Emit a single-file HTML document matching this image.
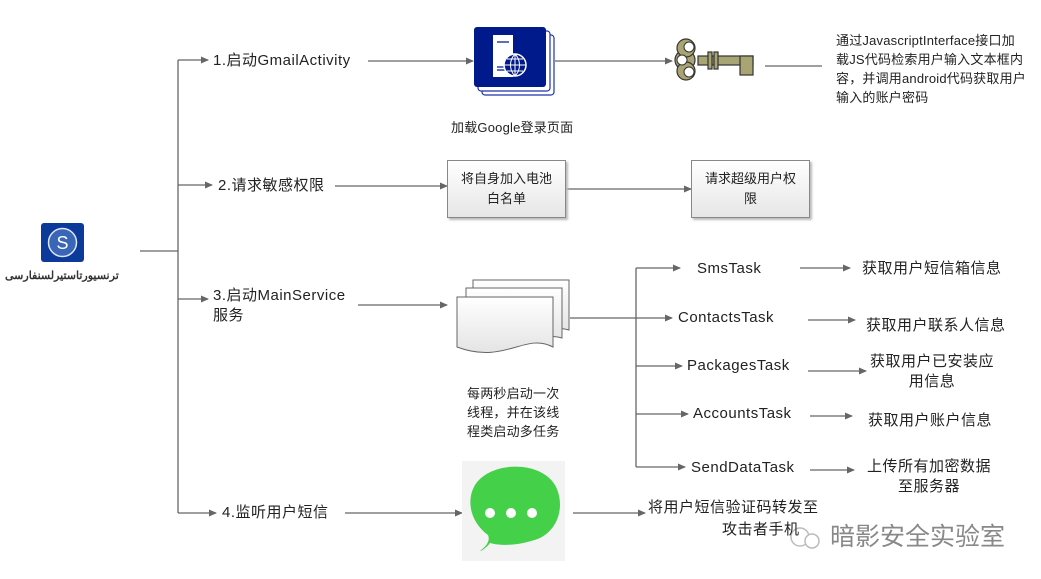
<!DOCTYPE html>
<html><head><meta charset="utf-8"><style>
body{margin:0;width:1041px;height:579px;background:#fff;overflow:hidden;position:relative;font-family:"Liberation Sans","Noto Sans CJK SC",sans-serif;color:#222}
.t{position:absolute;font-size:15px;white-space:nowrap;line-height:20px;letter-spacing:0.5px}
.s{font-size:13px;line-height:19px;letter-spacing:0.2px}
.box{position:absolute;width:117px;height:56px;border:1px solid #888;background:linear-gradient(#fff,#e6e6e6);box-shadow:2px 2px 2px #bbb;font-size:13px;line-height:20px;text-align:center;display:flex;align-items:center;justify-content:center}
</style></head><body>
<svg width="1041" height="579" style="position:absolute;left:0;top:0">
<defs><marker id="a" markerWidth="8" markerHeight="8" refX="7" refY="4" orient="auto" markerUnits="userSpaceOnUse"><path d="M0,0.5 L8,4 L0,7.5z" fill="#666"/></marker>
<linearGradient id="g" x1="0" y1="0" x2="0" y2="1"><stop offset="0" stop-color="#fff"/><stop offset="1" stop-color="#e4e4e4"/></linearGradient></defs>
<g stroke="#666" stroke-width="1.3" fill="none">
<path d="M140,251H178M178,60V513"/>
<path d="M178,60H208" marker-end="url(#a)"/>
<path d="M178,185H212" marker-end="url(#a)"/>
<path d="M178,299H208" marker-end="url(#a)"/>
<path d="M178,513H216" marker-end="url(#a)"/>
<path d="M368,61H473" marker-end="url(#a)"/>
<path d="M555,61H672" marker-end="url(#a)"/>
<path d="M765,66H822"/>
<path d="M335,186H447" marker-end="url(#a)"/>
<path d="M566,189H691" marker-end="url(#a)"/>
<path d="M358,305H447" marker-end="url(#a)"/>
<path d="M570,318H636M636,268V467"/>
<path d="M636,268H680" marker-end="url(#a)"/>
<path d="M636,318H672" marker-end="url(#a)"/>
<path d="M636,366H682" marker-end="url(#a)"/>
<path d="M636,414H688" marker-end="url(#a)"/>
<path d="M636,467H685" marker-end="url(#a)"/>
<path d="M800,268H850" marker-end="url(#a)"/>
<path d="M808,320H855" marker-end="url(#a)"/>
<path d="M808,371H866" marker-end="url(#a)"/>
<path d="M810,416H852" marker-end="url(#a)"/>
<path d="M810,470H854" marker-end="url(#a)"/>
<path d="M345,513H462" marker-end="url(#a)"/>
<path d="M573,513H645" marker-end="url(#a)"/>
</g>
<rect x="41" y="223" width="43" height="39" rx="3" fill="#0b3a9a"/>
<circle cx="62.5" cy="242.5" r="14" fill="#3a66b8" stroke="#dfe6f5" stroke-width="1.5"/>
<text x="62.5" y="249" font-size="18" fill="#fff" text-anchor="middle" font-family="Liberation Sans">S</text>
<rect x="482" y="35" width="72" height="60" rx="3" fill="#fff" stroke="#2233aa" stroke-width="1.2"/>
<rect x="478" y="31" width="72" height="60" rx="3" fill="#fff" stroke="#2233aa" stroke-width="1.2"/>
<rect x="474" y="27" width="72" height="60" rx="3" fill="#001a8c"/>
<rect x="493" y="35" width="20" height="42" fill="#fff"/>
<path d="M497,42h12M497,67h10M497,70h10" stroke="#001a8c" stroke-width="1.2"/>
<circle cx="515" cy="65" r="11" fill="#001a8c" stroke="#fff" stroke-width="1.5"/>
<path d="M504,65h22M515,54v22M507,59h16M507,71h16M515,54c-6,6-6,16,0,22M515,54c6,6,6,16,0,22" stroke="#fff" stroke-width="1" fill="none"/>
<g fill="#a9a474" stroke="#333" stroke-width="1.2">
<circle cx="685" cy="60" r="10"/><circle cx="686" cy="48" r="9"/><circle cx="686" cy="71" r="9"/>
<rect x="698" y="56" width="55" height="9"/><rect x="740" y="56" width="13" height="19"/><rect x="708" y="52" width="4" height="17"/><rect x="714" y="52" width="4" height="17"/>
</g>
<circle cx="682" cy="60" r="5" fill="#fff" stroke="#333"/><circle cx="689" cy="47" r="5" fill="#fff" stroke="#333"/><circle cx="689" cy="72" r="5" fill="#fff" stroke="#333"/>
<g stroke="#666" fill="url(#g)" stroke-width="1">
<path d="M473,280H569V330C550,324,530,338,473,330Z"/>
<path d="M466,288H562V338C543,332,523,346,466,338Z"/>
<path d="M457,297H553V347C525,332,505,365,457,347Z"/>
</g>
<rect x="462" y="461" width="103" height="100" fill="#f3f3f3"/>
<path d="M480,551C488,545 490,540 488,535C470,522 466,500 475,485C490,461 540,460 555,485C565,503 560,528 540,538C520,546 500,546 490,543C487,547 482,551 480,551Z" fill="#45d04a"/>
<circle cx="490" cy="513" r="5" fill="#fff"/><circle cx="511" cy="513" r="5" fill="#fff"/><circle cx="532" cy="513" r="5" fill="#fff"/>
<circle cx="800" cy="537" r="9" fill="none" stroke="#bbb" stroke-width="1.5"/>
<circle cx="812" cy="541" r="7" fill="#fff" stroke="#bbb" stroke-width="1.5"/>
</svg>
<div class="t" style="left:5px;top:266px;font-size:11px;font-weight:bold;color:#333;letter-spacing:0">ترنسیورتاستیرلسنفارسی</div>
<div class="t" style="left:213px;top:51px">1.启动GmailActivity</div>
<div class="t s" style="left:836px;top:31px">通过JavascriptInterface接口加<br>载JS代码检索用户输入文本框内<br>容，并调用android代码获取用户<br>输入的账户密码</div>
<div class="t s" style="left:451px;top:118px">加载Google登录页面</div>
<div class="t" style="left:218px;top:176px">2.请求敏感权限</div>
<div class="box" style="left:447px;top:160px">将自身加入电池<br>白名单</div>
<div class="box" style="left:691px;top:160px">请求超级用户权<br>限</div>
<div class="t" style="left:213px;top:286px">3.启动MainService<br>服务</div>
<div class="t s" style="left:467px;top:384px">每两秒启动一次<br>线程，并在该线<br>程类启动多任务</div>
<div class="t" style="left:697px;top:259px">SmsTask</div>
<div class="t" style="left:678px;top:308px">ContactsTask</div>
<div class="t" style="left:687px;top:356px">PackagesTask</div>
<div class="t" style="left:693px;top:404px">AccountsTask</div>
<div class="t" style="left:691px;top:458px">SendDataTask</div>
<div class="t" style="left:862px;top:259px">获取用户短信箱信息</div>
<div class="t" style="left:866px;top:316px">获取用户联系人信息</div>
<div class="t" style="left:870px;top:352px;text-align:center">获取用户已安装应<br>用信息</div>
<div class="t" style="left:868px;top:411px">获取用户账户信息</div>
<div class="t" style="left:867px;top:457px;text-align:center">上传所有加密数据<br>至服务器</div>
<div class="t" style="left:222px;top:503px">4.监听用户短信</div>
<div class="t" style="left:648px;top:498px">将用户短信验证码转发至</div>
<div class="t" style="left:722px;top:520px">攻击者手机</div>
<div class="t" style="left:828px;top:521px;font-size:25px;line-height:32px;color:#888;background:#fff;padding-left:2px;letter-spacing:0">暗影安全实验室</div>
</body></html>
